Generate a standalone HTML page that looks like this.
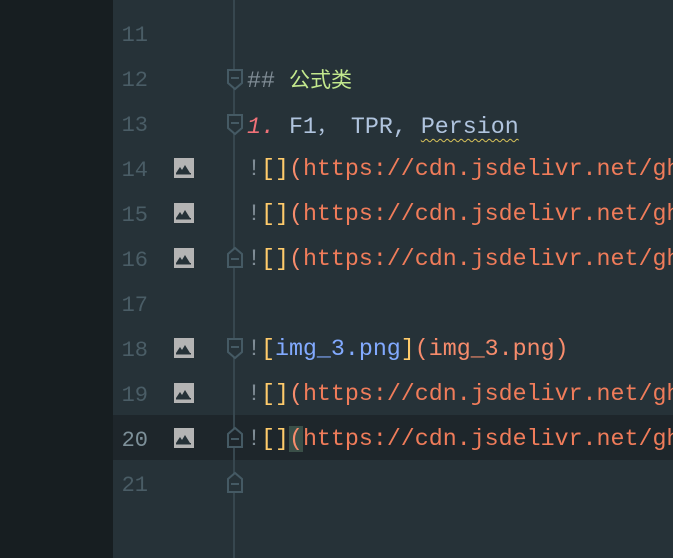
<!DOCTYPE html><html><head><style>
body{margin:0;width:673px;height:558px;background:#263238;position:relative;overflow:hidden;font-family:"Liberation Mono","Noto Sans CJK SC",monospace;font-size:23.3px}
.side{position:absolute;left:0;top:0;width:113px;height:558px;background:#171e21}
.cur{position:absolute;left:113px;top:415px;width:560px;height:45px;background:#1e262b}
.vl{position:absolute;left:233px;top:0;width:2px;height:558px;background:#37474f}
.ln{position:absolute;left:113px;width:35px;text-align:right;color:#4a5d66;line-height:45px;height:45px;font-size:22px;margin-top:1px}
.t{position:absolute;left:247px;line-height:45px;height:45px;white-space:pre;color:#b0c4de}
.ic{position:absolute;left:174px;width:20px;height:20px}
.fd{position:absolute;left:226px;width:18px;height:22px}
.g{color:#7f8c95}.y{color:#ffcb6b}.o{color:#f78c6c}.u{color:#f07c5a}.b{color:#82aaff}.r{color:#f07178;font-style:italic}.gr{color:#c3e88d}
</style></head><body>
<div class="side"></div><div class="cur"></div><div class="vl"></div>
<div class="ln" style="top:12px">11</div>
<div class="ln" style="top:57px">12</div>
<div class="ln" style="top:102px">13</div>
<div class="ln" style="top:147px">14</div>
<div class="ln" style="top:192px">15</div>
<div class="ln" style="top:237px">16</div>
<div class="ln" style="top:282px">17</div>
<div class="ln" style="top:327px">18</div>
<div class="ln" style="top:372px">19</div>
<div class="ln" style="top:417px;color:#7d9099">20</div>
<div class="ln" style="top:462px">21</div>

<svg class="ic" style="top:158px" viewBox="0 0 20 20"><rect width="20" height="20" fill="#b4b4b4"/><path d="M2 15L6 9L8 12L11 7L16 15Z" fill="#263238"/><rect x="2" y="15" width="15" height="1.5" fill="#263238"/></svg>
<svg class="ic" style="top:203px" viewBox="0 0 20 20"><rect width="20" height="20" fill="#b4b4b4"/><path d="M2 15L6 9L8 12L11 7L16 15Z" fill="#263238"/><rect x="2" y="15" width="15" height="1.5" fill="#263238"/></svg>
<svg class="ic" style="top:248px" viewBox="0 0 20 20"><rect width="20" height="20" fill="#b4b4b4"/><path d="M2 15L6 9L8 12L11 7L16 15Z" fill="#263238"/><rect x="2" y="15" width="15" height="1.5" fill="#263238"/></svg>
<svg class="ic" style="top:338px" viewBox="0 0 20 20"><rect width="20" height="20" fill="#b4b4b4"/><path d="M2 15L6 9L8 12L11 7L16 15Z" fill="#263238"/><rect x="2" y="15" width="15" height="1.5" fill="#263238"/></svg>
<svg class="ic" style="top:383px" viewBox="0 0 20 20"><rect width="20" height="20" fill="#b4b4b4"/><path d="M2 15L6 9L8 12L11 7L16 15Z" fill="#263238"/><rect x="2" y="15" width="15" height="1.5" fill="#263238"/></svg>
<svg class="ic" style="top:428px" viewBox="0 0 20 20"><rect width="20" height="20" fill="#b4b4b4"/><path d="M2 15L6 9L8 12L11 7L16 15Z" fill="#263238"/><rect x="2" y="15" width="15" height="1.5" fill="#263238"/></svg>

<svg class="fd" style="top:69px" viewBox="0 0 18 22"><path d="M2 1H16V14L9 20L2 14Z" fill="#263238" stroke="#455a64" stroke-width="2"/><rect x="5" y="8" width="8" height="2" fill="#455a64"/></svg>
<svg class="fd" style="top:114px" viewBox="0 0 18 22"><path d="M2 1H16V14L9 20L2 14Z" fill="#263238" stroke="#455a64" stroke-width="2"/><rect x="5" y="8" width="8" height="2" fill="#455a64"/></svg>
<svg class="fd" style="top:338px" viewBox="0 0 18 22"><path d="M2 1H16V14L9 20L2 14Z" fill="#263238" stroke="#455a64" stroke-width="2"/><rect x="5" y="8" width="8" height="2" fill="#455a64"/></svg>
<svg class="fd" style="top:246px" viewBox="0 0 18 22"><path d="M2 21H16V8L9 2L2 8Z" fill="#263238" stroke="#455a64" stroke-width="2"/><rect x="5" y="12" width="8" height="2" fill="#455a64"/></svg>
<svg class="fd" style="top:426px" viewBox="0 0 18 22"><path d="M2 21H16V8L9 2L2 8Z" fill="#1e262b" stroke="#455a64" stroke-width="2"/><rect x="5" y="12" width="8" height="2" fill="#455a64"/></svg>
<svg class="fd" style="top:471px" viewBox="0 0 18 22"><path d="M2 21H16V8L9 2L2 8Z" fill="#263238" stroke="#455a64" stroke-width="2"/><rect x="5" y="12" width="8" height="2" fill="#455a64"/></svg>

<div class="t" style="top:57px"><span class="g">##</span> <span class="gr" style="font-family:'Noto Sans CJK SC',sans-serif;font-size:21px">公式类</span></div>
<div class="t" style="top:102px"><span class="r">1.</span> F1<span style="font-family:'Noto Sans CJK SC',sans-serif;font-size:20px">，</span> TPR, <span style="text-decoration:underline wavy #d8c35a;text-underline-offset:5px;text-decoration-thickness:1px">Persion</span></div>
<div class="t" style="top:147px"><span class="g">!</span><span class="y">[]</span><span class="o">(</span><span class="u">https://cdn.jsdelivr.net/gh</span></div>
<div class="t" style="top:192px"><span class="g">!</span><span class="y">[]</span><span class="o">(</span><span class="u">https://cdn.jsdelivr.net/gh</span></div>
<div class="t" style="top:237px"><span class="g">!</span><span class="y">[]</span><span class="o">(</span><span class="u">https://cdn.jsdelivr.net/gh</span></div>
<div class="t" style="top:327px"><span class="g">!</span><span class="y">[</span><span class="b">img_3.png</span><span class="y">]</span><span class="o">(img_3.png)</span></div>
<div class="t" style="top:372px"><span class="g">!</span><span class="y">[]</span><span class="o">(</span><span class="u">https://cdn.jsdelivr.net/gh</span></div>
<div class="t" style="top:417px"><span class="g">!</span><span class="y">[]</span><span class="o" style="background:#3a4f48">(</span><span class="u">https://cdn.jsdelivr.net/gh</span></div>
</body></html>
